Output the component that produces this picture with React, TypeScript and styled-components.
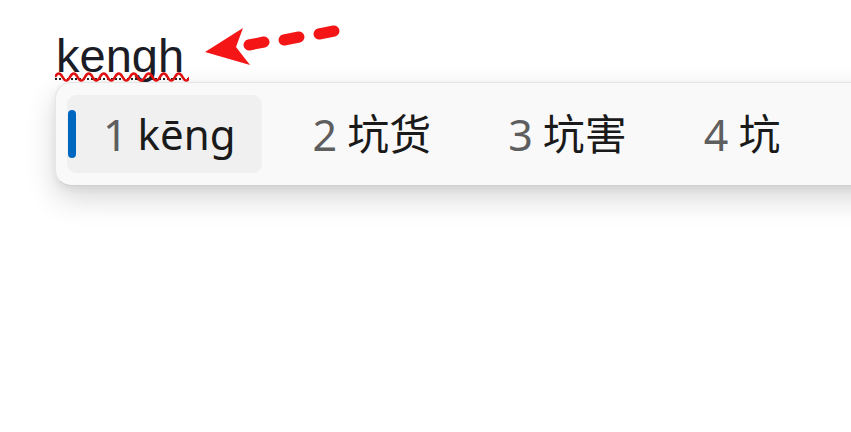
import React from "react";
import styled, { createGlobalStyle } from "styled-components";

const GlobalStyle = createGlobalStyle`
  html, body {
    margin: 0;
    padding: 0;
    background: #ffffff;
    overflow: hidden;
  }
`;

interface Candidate {
  index: number;
  text: string;
}

const candidates: Candidate[] = [
  { index: 1, text: "kēng" },
  { index: 2, text: "坑货" },
  { index: 3, text: "坑害" },
  { index: 4, text: "坑" },
];

// wavy spell-check line under the composition string
const wave = "M0 6 q3.75 -7 7.5 0" + " t7.5 0".repeat(17);

const App = () => {
  return (
    <>
      <GlobalStyle />
      <Page>
        <Composition>
          <Typed>
            kengh
            <Squiggle width="134" height="14" viewBox="0 0 134 14">
              <line
                x1="0"
                y1="8"
                x2="134"
                y2="8"
                stroke="#222"
                strokeWidth="2"
                strokeDasharray="2 2"
              />
              <path d={wave} fill="none" stroke="#e01010" strokeWidth="2.6" />
            </Squiggle>
          </Typed>
          <Arrow width="150" height="50" viewBox="0 0 150 50">
            <path d="M5 37 L43 13 L36 32 L50 50 Z" fill="#f41616" />
            <g stroke="#f41616" strokeWidth="11" strokeLinecap="round">
              <line x1="49" y1="30" x2="64" y2="27" />
              <line x1="84" y1="25" x2="99" y2="22" />
              <line x1="119" y1="19" x2="134" y2="16" />
            </g>
          </Arrow>
        </Composition>

        <CandidateBar>
          {candidates.map((c, i) => (
            <Item key={c.index} selected={i === 0}>
              <Indicator selected={i === 0} />
              <Digit>{c.index}</Digit>
              <Word>{c.text}</Word>
            </Item>
          ))}
        </CandidateBar>
      </Page>
    </>
  );
};

export default App;

const Page = styled.div`
  width: 851px;
  height: 432px;
  padding-top: 32px;
  box-sizing: border-box;
`;

const Composition = styled.div`
  position: relative;
  padding-left: 56px;
  height: 50px;
`;

const Typed = styled.span`
  position: relative;
  display: inline-block;
  font-family: "Liberation Sans", Arial, sans-serif;
  font-size: 47px;
  line-height: 47px;
  color: #1c1c26;
`;

const Squiggle = styled.svg`
  position: absolute;
  left: -1px;
  top: 39px;
`;

const Arrow = styled.svg`
  position: absolute;
  left: 200px;
  top: -17px;
`;

const CandidateBar = styled.div`
  display: flex;
  align-items: center;
  gap: 15px;
  margin-left: 55px;
  width: 900px;
  height: 104px;
  box-sizing: border-box;
  padding: 12px 11px;
  background: #f9f9f9;
  border: 1px solid #e6e6e6;
  border-bottom-color: #d0d0d0;
  border-radius: 16px;
  box-shadow: 0 12px 30px rgba(0, 0, 0, 0.16), 0 3px 8px rgba(0, 0, 0, 0.06);
`;

const Item = styled.div<{ selected?: boolean }>`
  display: flex;
  align-items: center;
  height: 78px;
  padding: 0 26px 0 1px;
  border-radius: 9px;
  background: ${(p) => (p.selected ? "#f0f0f0" : "transparent")};
  font-family: "Segoe UI", "Noto Sans", "Noto Sans CJK SC", sans-serif;
  font-size: 43px;
  line-height: 1;
  white-space: nowrap;
`;

const Indicator = styled.span<{ selected?: boolean }>`
  flex: none;
  width: 8px;
  height: 48px;
  margin-right: 27px;
  border-radius: 4px;
  background: ${(p) => (p.selected ? "#0067c0" : "transparent")};
`;

const Digit = styled.span`
  color: #5e5e5e;
  margin-right: 10px;
`;

const Word = styled.span`
  color: #1a1a1a;
  font-family: "Noto Sans", "Noto Sans CJK SC", sans-serif;
  font-size: 42px;
`;
